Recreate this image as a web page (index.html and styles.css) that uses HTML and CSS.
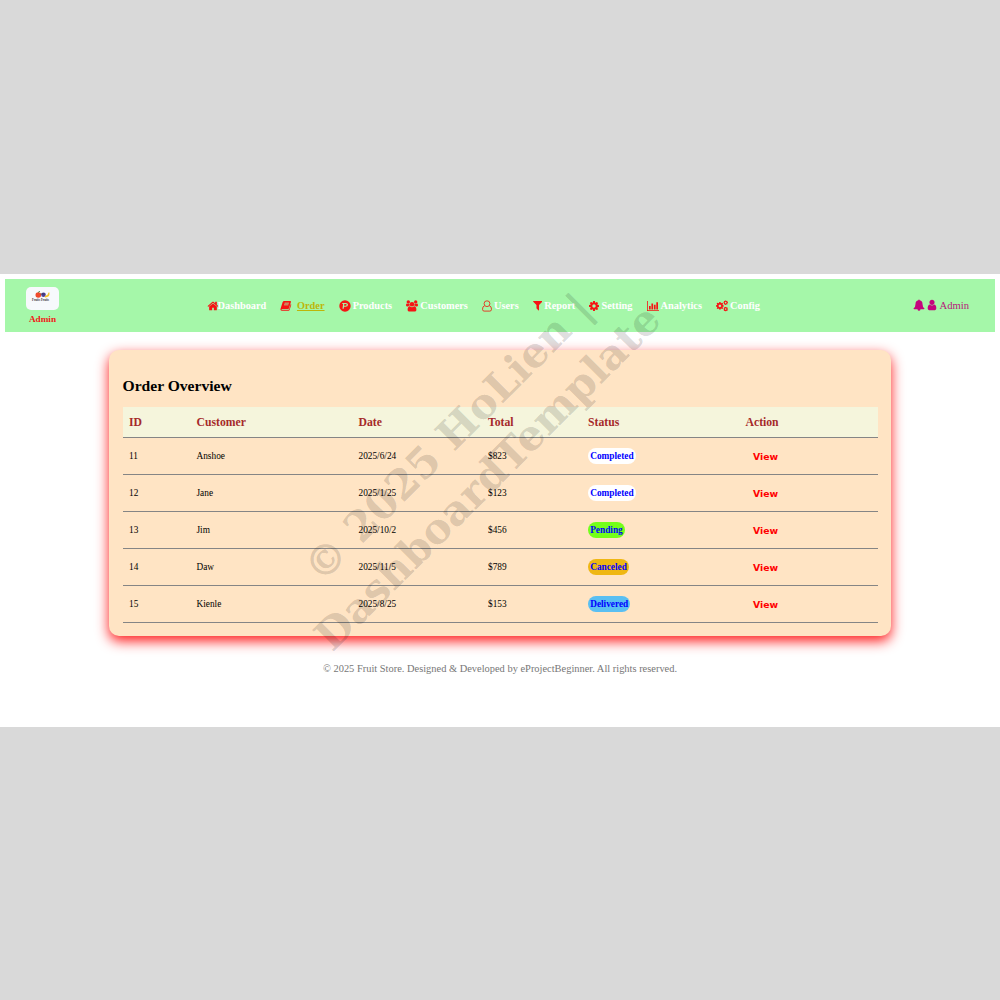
FILE: index.html
```html
<!DOCTYPE html>
<html lang="en">
<head>
<meta charset="utf-8">
<title>Order Overview</title>
<link rel="stylesheet" href="styles.css">
</head>
<body>
<svg class="defs" width="0" height="0">
  <symbol id="cog" viewBox="128 128 1536 1536"><path d="M1152 896q0-106-75-181t-181-75-181 75-75 181 75 181 181 75 181-75 75-181zm512-109v222q0 12-8 23t-20 13l-185 28q-19 54-39 91 35 50 107 138 10 12 10 25t-9 23q-27 37-99 108t-94 71q-12 0-26-9l-138-108q-44 23-91 38-16 136-29 186-7 28-36 28h-222q-14 0-24.500-8.500t-11.500-21.500l-28-184q-49-16-90-37l-141 107q-10 9-25 9-14 0-25-11-126-114-165-168-7-10-7-23 0-12 8-23 15-21 51-66.500t54-70.500q-27-50-41-99l-183-27q-13-2-21-12.500t-8-23.500v-222q0-12 8-23t19-13l186-28q14-46 39-92-40-57-107-138-10-12-10-24 0-10 9-23 26-36 98.500-107.500t94.500-71.500q13 0 26 10l138 107q44-23 91-38 16-136 29-186 7-28 36-28h222q14 0 24.500 8.500t11.500 21.500l28 184q49 16 90 37l142-107q9-9 24-9 13 0 25 10 129 119 165 170 7 8 7 22 0 12-8 23-15 21-51 66.500t-54 70.500q26 50 41 98l183 28q13 2 21 12.500t8 23.500z"/></symbol>
</svg>
<div class="page">
  <header class="navbar">
    <div class="brand">
      <svg class="logo" viewBox="0 0 33 23">
        <circle cx="12.300" cy="8" r="2.800" fill="#f04a2c"/><path d="M12 5.500l2-1.300" stroke="#3a7a35" stroke-width=".8"/>
        <circle cx="17.500" cy="7.700" r="2.300" fill="#4b3f9c"/><path d="M14.500 7h4" stroke="#333" stroke-width=".7"/>
        <path d="M23.500 5.500q.5 4.900-4.400 4.900-1-.7.200-1.700 2.700-.3 3.200-3.200z" fill="#f5c62d"/>
        <text x="6" y="13.800" class="logo-text" textLength="17">Fruits Fruits</text>
      </svg>
      <span class="brand-name">Admin</span>
    </div>
    <nav class="menu">
      <a class="item tight"><svg class="icon" viewBox="0 0 1792 1792"><path d="M1472 992v480q0 26-19 45t-45 19h-384v-384h-256v384h-384q-26 0-45-19t-19-45v-480q0-1 .5-3t.5-3l575-474 575 474q1 2 1 6zm223-69l-62 74q-8 9-21 11h-3q-13 0-21-7l-692-577-692 577q-12 8-24 7-13-2-21-11l-62-74q-8-10-7-23.500t11-21.500l719-599q32-26 76-26t76 26l244 204v-195q0-14 9-23t23-9h192q14 0 23 9t9 23v408l219 182q10 8 11 21.500t-7 23.500z"/></svg><span>Dashboard</span></a>
      <a class="item active"><svg class="icon book" viewBox="0 0 12 12"><path fill-rule="evenodd" d="M4.300.7h6.500q.8.100.6 1l-2 6.700q-.3.700-1 .7H2q-.6.100-.6.400t.7.300h6.700q.5 0 .7-.5l1.700-5.500q.8.300.5 1.200l-1.600 5q-.3.900-1.200.9H1.800Q.3 10.900.4 9.400l2.300-7.200Q3.200.7 4.300.7zM4.800 2.700l-.2.700h4.600l.2-.7zM4.300 4.500l-.2.700h4.600l.2-.7z"/></svg><span>Order</span></a>
      <a class="item"><svg class="icon" viewBox="0 0 12 12"><path fill-rule="evenodd" d="M6 .3a5.700 5.700 0 1 1 0 11.400A5.700 5.700 0 0 1 6 .3zM3.300 3v1h.8L3.500 8.800h1.200l.3-2h1.500Q9 6.700 9 4.800 8.900 3 6.800 3zm2 1h1.300q1.100 0 1.100.8 0 1-1.200 1H5.100z"/></svg><span>Products</span></a>
      <a class="item"><svg class="icon" viewBox="0 0 12 12"><circle cx="6" cy="4.300" r="2.300"/><circle cx="2.300" cy="2" r="1.700"/><circle cx="9.700" cy="2" r="1.700"/><path d="M3.900 6.200Q6 8.200 8.100 6.200q2.300.2 2.300 3.600 0 1.700-1.300 1.700H2.900q-1.300 0-1.300-1.700 0-3.400 2.300-3.600zM.9 3.500q1.300.9 2.400.2 0 1.200.7 1.900-1.400 0-1.900.8Q0 6.700 0 5.200q0-1.600.9-1.700zM11.100 3.500q-1.300.9-2.400.2 0 1.200-.7 1.900 1.400 0 1.900.8 2.100.3 2.100-1.200 0-1.600-.9-1.700z"/></svg><span>Customers</span></a>
      <a class="item"><svg class="icon narrow line" viewBox="1 0 10 12"><circle cx="6" cy="3.700" r="2.900"/><path d="M3.700 5.700Q1.500 6.200 1.500 9.200q0 1.900 1.600 1.900h5.800q1.600 0 1.600-1.900 0-3-2.200-3.500"/></svg><span>Users</span></a>
      <a class="item"><svg class="icon funnel" viewBox="180 120 1432 1550" preserveAspectRatio="none"><path d="M1595 295q17 41-14 70l-493 493v742q0 42-39 59-13 5-25 5-27 0-45-19l-256-256q-19-19-19-45v-486l-493-493q-31-29-14-70 17-39 59-39h1280q42 0 59 39z"/></svg><span>Report</span></a>
      <a class="item"><svg class="icon narrow"><use href="#cog"/></svg><span>Setting</span></a>
      <a class="item"><svg class="icon" viewBox="0 0 12 12"><path d="M0 1h.8v9.200H12v.9H0zM2 6h1.700v3.500H2zM4.400 3.500h1.700v6H4.400zM6.900 4.700h1.700v4.800H6.900zM9.300 2.200H11v7.300H9.300z"/></svg><span>Analytics</span></a>
      <a class="item"><svg class="icon" viewBox="0 0 12 12"><use href="#cog" x="0" y="2" width="7.800" height="7.800"/><use href="#cog" x="7.300" y=".3" width="4.700" height="4.700"/><use href="#cog" x="7.300" y="6.700" width="4.700" height="4.700"/></svg><span>Config</span></a>
    </nav>
    <div class="account">
      <svg class="icon" viewBox="0 0 12 12"><path d="M6 .4q.7 0 .7.800 2.800.6 2.800 3.800 0 3.300 2 4.500 0 .8-.9.800H1.400q-.9 0-.9-.8 2-1.200 2-4.500 0-3.200 2.800-3.800 0-.8.700-.8zM4.500 10.300h3q-.2 1.500-1.500 1.500t-1.500-1.500z"/></svg>
      <svg class="icon person" viewBox="0 0 1792 1792"><path d="M1536 1399q0 109-62.500 187t-150.500 78h-854q-88 0-150.500-78t-62.500-187q0-85 8.500-160.500t31.500-152 58.500-131 94-89 134.500-34.500q131 128 313 128t313-128q76 0 134.500 34.500t94 89 58.500 131 31.500 152 8.500 160.500zm-256-887q0 159-112.500 271.500t-271.500 112.500-271.500-112.500-112.500-271.500 112.500-271.500 271.500-112.500 271.500 112.500 112.500 271.500z"/></svg>
      <span>Admin</span>
    </div>
  </header>
  <main class="card">
    <h2 class="title">Order Overview</h2>
    <table class="orders">
      <colgroup><col class="c-id"><col class="c-customer"><col class="c-date"><col class="c-total"><col class="c-status"><col></colgroup>
      <thead><tr><th>ID</th><th>Customer</th><th>Date</th><th>Total</th><th>Status</th><th>Action</th></tr></thead>
      <tbody>
        <tr><td>11</td><td>Anshoe</td><td>2025/6/24</td><td>$823</td><td><span class="badge completed">Completed</span></td><td><button class="view">View</button></td></tr>
        <tr><td>12</td><td>Jane</td><td>2025/1/25</td><td>$123</td><td><span class="badge completed">Completed</span></td><td><button class="view">View</button></td></tr>
        <tr><td>13</td><td>Jim</td><td>2025/10/2</td><td>$456</td><td><span class="badge pending">Pending</span></td><td><button class="view">View</button></td></tr>
        <tr><td>14</td><td>Daw</td><td>2025/11/5</td><td>$789</td><td><span class="badge canceled">Canceled</span></td><td><button class="view">View</button></td></tr>
        <tr><td>15</td><td>Kienle</td><td>2025/8/25</td><td>$153</td><td><span class="badge delivered">Delivered</span></td><td><button class="view">View</button></td></tr>
      </tbody>
    </table>
  </main>
  <footer class="footer">© 2025 Fruit Store. Designed &amp; Developed by eProjectBeginner. All rights reserved.</footer>
  <div class="watermark">© 2025 HoLien |<br>DashboardTemplate</div>
</div>
</body>
</html>
```
FILE: styles.css
```css
* { box-sizing: border-box; }
body {
  margin: 0;
  height: 1000px;
  padding-top: 274px;
  background: #d9d9d9;
  font-family: "Liberation Serif", "Times New Roman", serif;
  overflow: hidden;
}
.defs { position: absolute; }
.page {
  position: relative;
  height: 452.500px;
  padding: 5px;
  background: #fff;
}
.navbar {
  display: flex;
  align-items: center;
  height: 53px;
  padding: 0 26px 0 21px;
  background: #a5f7a9;
}
.brand {
  display: flex;
  flex-direction: column;
  align-items: center;
  width: 33px;
  gap: 4px;
}
.logo {
  width: 33px;
  height: 23px;
  border-radius: 5px;
  background: #f7f9fc;
}
.logo-text { font: bold 3px "Liberation Serif", serif; fill: #333; }
.brand-name { font-size: 9.200px; line-height: 10px; font-weight: bold; color: #f21818; }
.menu {
  display: flex;
  gap: 14.100px;
  margin-left: 147.500px;
  padding-top: 1px;
  font-size: 10.350px;
  font-weight: bold;
  color: #fff;
}
.item { display: flex; align-items: center; gap: 2px; line-height: 14px; }
.tight { gap: 0; }
.tight .icon { margin-right: -1px; }
.active { gap: 5px; color: #bdb60a; text-decoration: underline; }
.icon { width: 12px; height: 12px; margin-top: -1px; fill: #f51414; flex: none; }
.book { width: 11.500px; }
.narrow { width: 10px; }
.funnel { width: 9.500px; height: 10.500px; }
.line { fill: none; stroke: #e0412b; stroke-width: 1; }
.account {
  display: flex;
  align-items: center;
  gap: 1px;
  margin-left: auto;
  font-size: 10.600px;
  color: #b8137a;
}
.account .icon { fill: #c4057d; }
.account span { margin-left: 1px; }
.card {
  width: 782px;
  height: 286px;
  margin: 18px auto 0;
  padding: 27px 13px 0 13.500px;
  border-radius: 10px;
  background: #ffe4c4;
  box-shadow: 0 5px 13px #ff1a1a;
}
.title { margin: 0; font-size: 15.600px; line-height: 18px; }
.orders {
  width: 755px;
  margin-top: 12px;
  border-collapse: separate;
  border-spacing: 0;
  table-layout: fixed;
  text-align: left;
}
.c-id { width: 67.500px; }
.c-customer { width: 162px; }
.c-date { width: 129.500px; }
.c-total { width: 100px; }
.c-status { width: 157.500px; }
.orders th, .orders td {
  padding: 0 6.500px;
  border-bottom: 1px solid #858585;
}
.orders th { height: 31px; font-size: 11.700px; color: #a52a2a; background: #f5f5dc; }
.orders td { height: 37px; font-size: 9.300px; color: #000; }
.badge {
  display: inline-block;
  padding: 1px 2.200px 0;
  border-radius: 8px;
  line-height: 14.500px;
  font-weight: bold;
  color: #00f;
}
.completed { background: #fff; }
.pending { background: #73ff19; }
.canceled { background: #efb713; }
.delivered { background: #5abff2; }
.view {
  padding: 2px 7.500px 0;
  border: 0;
  background: none;
  font: bold 9.300px/12px "DejaVu Sans", sans-serif;
  color: #f00;
}
.footer { margin-top: 26px; text-align: center; font-size: 10.430px; line-height: 13px; color: #777; }
.watermark {
  position: absolute;
  left: 467.500px;
  top: 184px;
  transform: translate(-50%, -50%) rotate(-45deg);
  font: bold 41.800px/56px "DejaVu Serif", serif;
  text-align: center;
  white-space: nowrap;
  color: rgba(0, 0, 0, .15);
  pointer-events: none;
}
```
